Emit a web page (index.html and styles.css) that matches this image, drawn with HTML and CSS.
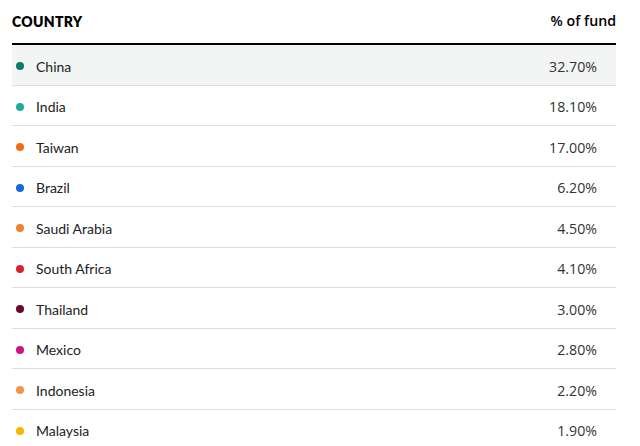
FILE: index.html
```html
<!DOCTYPE html>
<html lang="en">
<head>
<meta charset="utf-8">
<link rel="stylesheet" href="styles.css">
</head>
<body>
<div class="table">
  <div class="head">
    <div class="h-country">COUNTRY</div>
    <div class="h-pct">% of fund</div>
  </div>
  <div class="row first"><span class="dot c1"></span><span class="name">China</span><span class="val">32.70%</span></div>
  <div class="row"><span class="dot c2"></span><span class="name">India</span><span class="val">18.10%</span></div>
  <div class="row"><span class="dot c3"></span><span class="name">Taiwan</span><span class="val">17.00%</span></div>
  <div class="row"><span class="dot c4"></span><span class="name">Brazil</span><span class="val">6.20%</span></div>
  <div class="row"><span class="dot c5"></span><span class="name">Saudi Arabia</span><span class="val">4.50%</span></div>
  <div class="row"><span class="dot c6"></span><span class="name">South Africa</span><span class="val">4.10%</span></div>
  <div class="row"><span class="dot c7"></span><span class="name">Thailand</span><span class="val">3.00%</span></div>
  <div class="row"><span class="dot c8"></span><span class="name">Mexico</span><span class="val">2.80%</span></div>
  <div class="row"><span class="dot c9"></span><span class="name">Indonesia</span><span class="val">2.20%</span></div>
  <div class="row"><span class="dot c10"></span><span class="name">Malaysia</span><span class="val">1.90%</span></div>
</div>
</body>
</html>
```
FILE: styles.css
```css
html, body { margin: 0; padding: 0; background: #fff; }
body { font-family: "Lato", "Open Sans", sans-serif; color: #1a1a1a; }
.table { margin: 0 24px 0 12px; width: 604px; }
.head {
  display: flex; justify-content: space-between; align-items: flex-end;
  height: 45px; box-sizing: border-box; padding-bottom: 13px;
  border-bottom: 2px solid #000;
}
.h-country { font-family: "Lato", sans-serif; font-weight: 800; font-size: 14px; letter-spacing: 0.3px; color: #000; }
.h-pct { font-family: "Open Sans", sans-serif; font-weight: 600; font-size: 14.2px; color: #000; }
.row {
  display: flex; align-items: center; height: 40.5px; box-sizing: border-box;
  padding-top: 3px;
  border-bottom: 1px solid #dedede; font-size: 14px; color: #222;
}
.row.first { background: #f3f4f4; }
.dot { width: 8px; height: 8px; border-radius: 50%; margin-left: 4px; margin-right: 12px; flex: none; }
.name { flex: 1; font-family: "Lato", sans-serif; }
.val { font-family: "Open Sans", sans-serif; font-size: 14.2px; padding-right: 19px; color: #333; }
.c1 { background: #0b7a6e; }
.c2 { background: #22aaa0; }
.c3 { background: #ee6d10; }
.c4 { background: #1468e0; }
.c5 { background: #f08030; }
.c6 { background: #d8232a; }
.c7 { background: #6a0a2a; }
.c8 { background: #cc1480; }
.c9 { background: #f0964a; }
.c10 { background: #f8b400; }
```
